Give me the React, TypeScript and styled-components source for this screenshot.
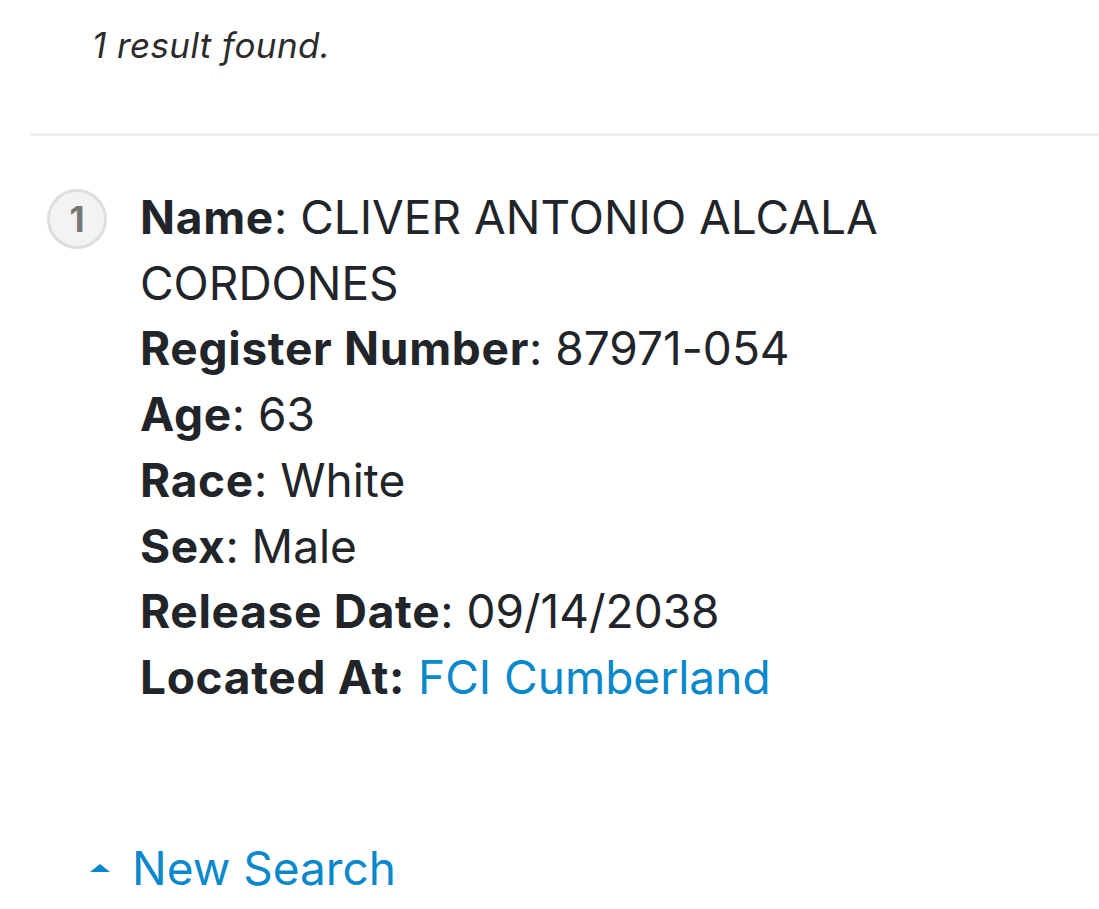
import React from 'react';
import styled, { createGlobalStyle } from 'styled-components';

const GlobalStyle = createGlobalStyle`
  html, body {
    margin: 0;
    padding: 0;
    background: #ffffff;
  }

  body {
    font-family: Inter, "Noto Sans", "Liberation Sans", sans-serif;
    font-feature-settings: "calt" 0;
    color: #212529;
    overflow: hidden;
  }
`;

const inmate = {
  name: 'CLIVER ANTONIO ALCALA CORDONES',
  registerNumber: '87971-054',
  age: '63',
  race: 'White',
  sex: 'Male',
  releaseDate: '09/14/2038',
  facility: 'FCI Cumberland',
};

const fields: [string, string][] = [
  ['Name', inmate.name],
  ['Register Number', inmate.registerNumber],
  ['Age', inmate.age],
  ['Race', inmate.race],
  ['Sex', inmate.sex],
  ['Release Date', inmate.releaseDate],
];

const App = () => {
  return (
    <>
      <GlobalStyle />
      <Container>
        <ResultCount>1 result found.</ResultCount>
        <Divider />
        <ResultList>
          <ResultItem>
            <Badge>1</Badge>
            <Details>
              {fields.map(([label, value]) => (
                <Line key={label}>
                  <Label>{label}</Label>: {value}
                </Line>
              ))}
              <Line>
                <Label>Located At:</Label> <Link href="#">{inmate.facility}</Link>
              </Line>
            </Details>
          </ResultItem>
        </ResultList>
        <NewSearch href="#">
          <Caret />
          New Search
        </NewSearch>
      </Container>
    </>
  );
};

const Container = styled.main`
  width: 100%;
  padding: 0 0 0 30px;
  box-sizing: border-box;
`;

const ResultCount = styled.p`
  margin: 0;
  padding: 21px 0 0 62px;
  font-style: italic;
  font-size: 35px;
  line-height: 48px;
  letter-spacing: 0.4px;
  color: #2b2b2b;
`;

const Divider = styled.hr`
  margin: 64px 0 0;
  border: 0;
  border-top: 3px solid #efefef;
`;

const ResultList = styled.ol`
  list-style: none;
  margin: 0;
  padding: 49px 0 0 17px;
`;

const ResultItem = styled.li`
  display: flex;
  align-items: flex-start;
  gap: 33px;
`;

const Badge = styled.span`
  flex: none;
  width: 60px;
  height: 60px;
  margin-top: 4px;
  box-sizing: border-box;
  border: 3px solid #dedede;
  border-radius: 50%;
  background: #f3f3f3;
  color: #777777;
  font-size: 35px;
  font-weight: 700;
  display: flex;
  align-items: center;
  justify-content: center;
`;

const Details = styled.div`
  font-size: 46px;
  line-height: 65.7px;
  max-width: 780px;
`;

const Line = styled.div``;

const Label = styled.strong`
  font-weight: 700;
  letter-spacing: 0.7px;
`;

const Link = styled.a`
  color: #0a88cc;
  text-decoration: none;
`;

const NewSearch = styled.a`
  display: inline-flex;
  align-items: center;
  gap: 22px;
  margin: 125px 0 0 60px;
  color: #0a88cc;
  font-size: 46px;
  line-height: 64px;
  text-decoration: none;
`;

const Caret = styled.span`
  width: 0;
  height: 0;
  border-left: 10px solid transparent;
  border-right: 10px solid transparent;
  border-bottom: 8px solid #0a88cc;
`;

export default App;
